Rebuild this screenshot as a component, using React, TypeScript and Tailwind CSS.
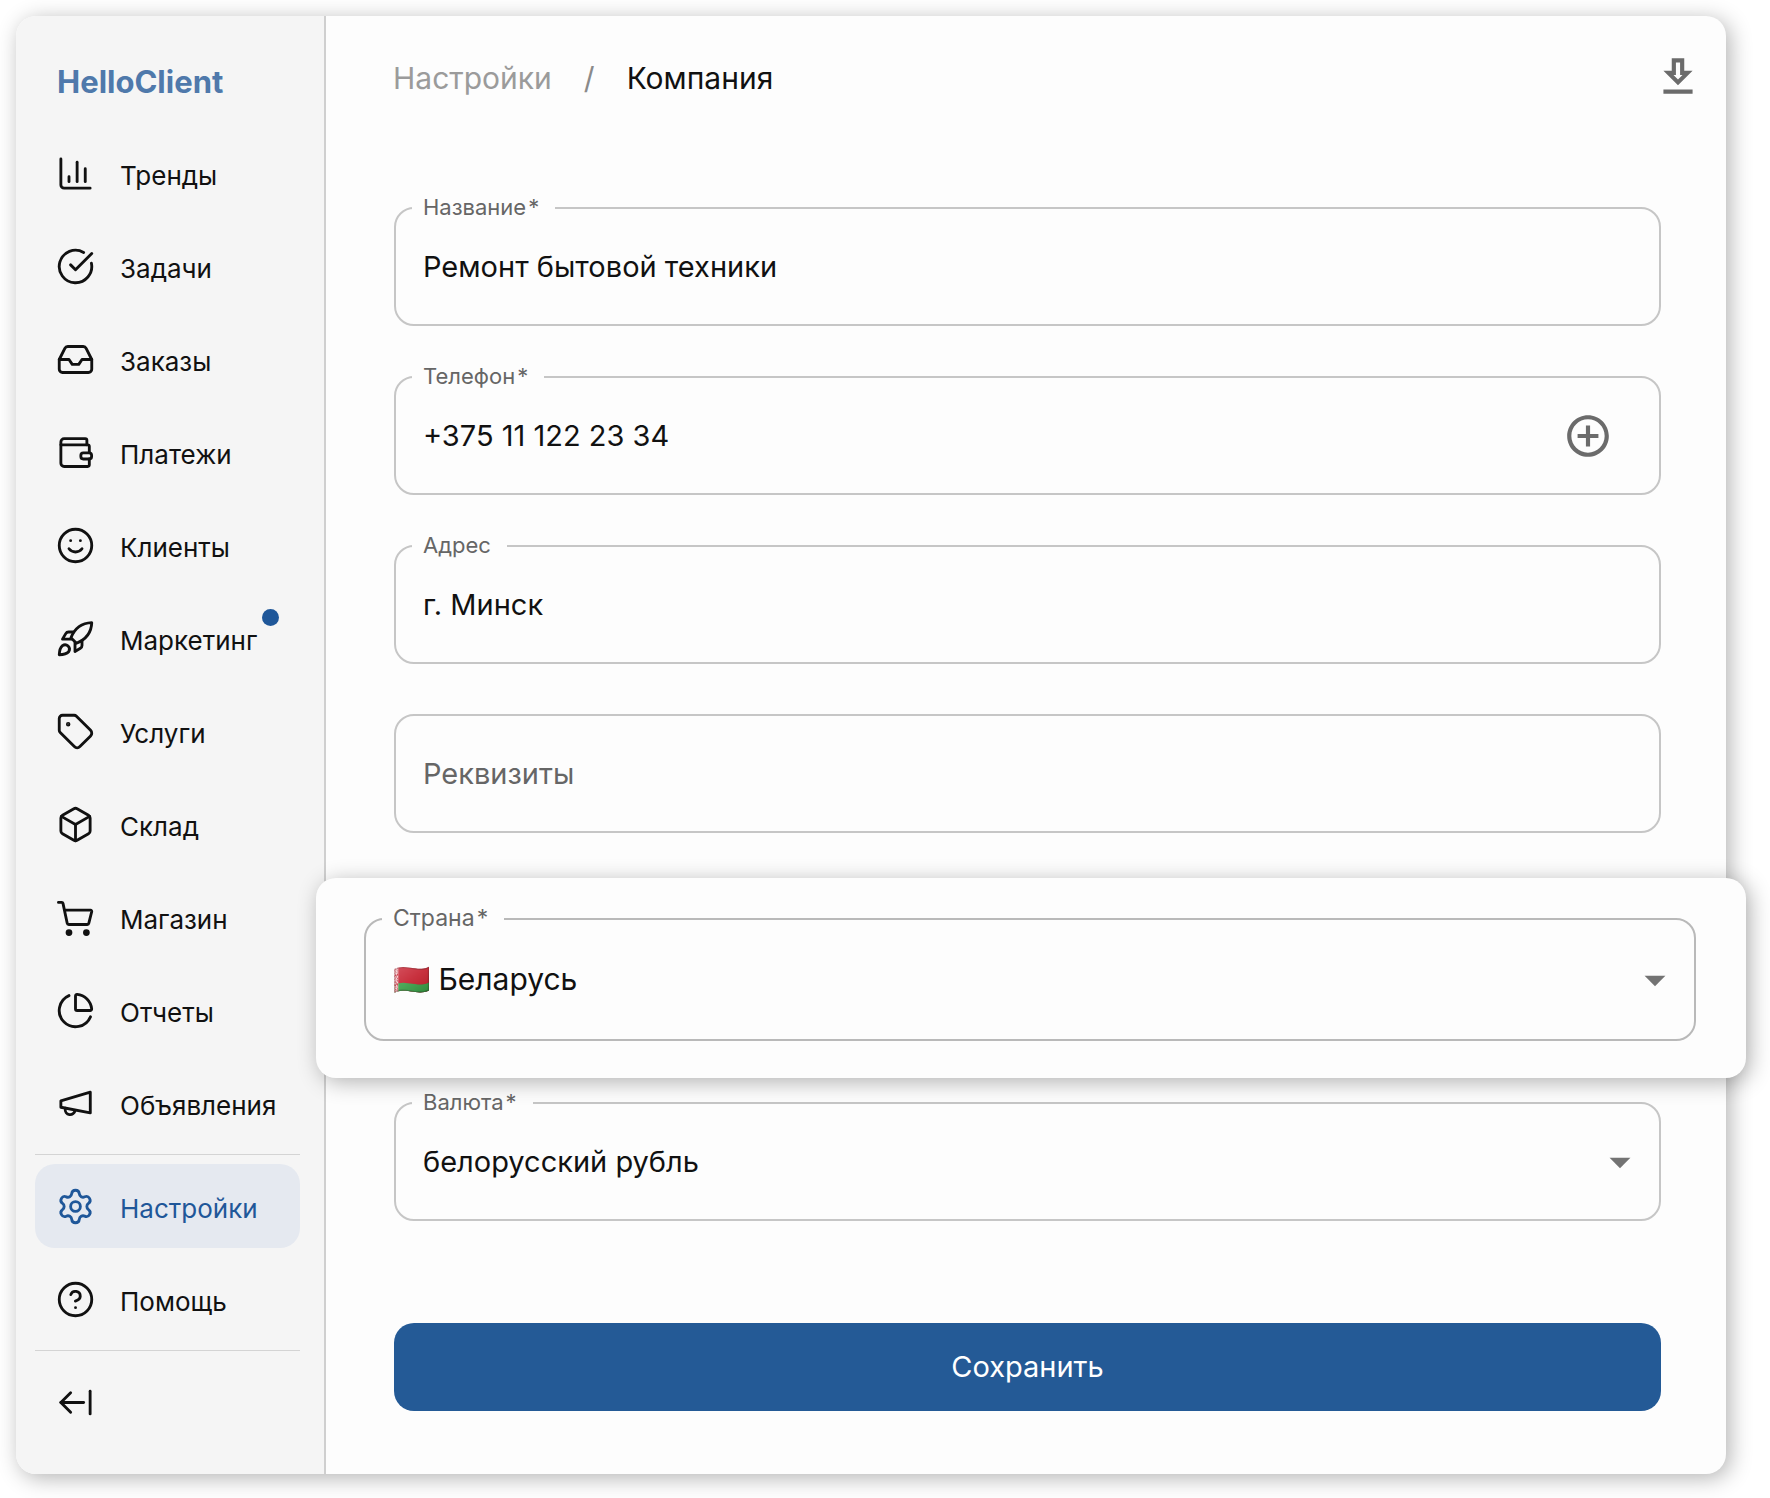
import React, { useState } from "react";
import {
  ArrowLeftFromLine,
  Box,
  ChartColumn,
  ChartPie,
  CircleCheckBig,
  CircleQuestionMark,
  Inbox,
  Settings,
  Smile,
  Tag,
} from "lucide-react";

type IconProps = { className?: string; strokeWidth?: number };

function StrokeIcon({ className, strokeWidth, children }: IconProps & { children: React.ReactNode }) {
  return (
    <svg
      viewBox="0 0 24 24"
      fill="none"
      stroke="currentColor"
      strokeWidth={strokeWidth}
      strokeLinecap="round"
      strokeLinejoin="round"
      className={className}
      aria-hidden="true"
    >
      {children}
    </svg>
  );
}

const WalletIcon = (props: IconProps) => (
  <StrokeIcon {...props}>
    <path d="M19 7.3V4.5a1 1 0 0 0-1-1H5a2 2 0 0 0-2 2v13.1a2 2 0 0 0 2 2h14.5a1 1 0 0 0 1-1V16" />
    <path d="M3 7.3h16.5a1 1 0 0 1 1 1v3.9" />
    <rect x="15.3" y="12.2" width="6.6" height="3.8" rx="1.5" />
  </StrokeIcon>
);

const RocketIcon = (props: IconProps) => (
  <StrokeIcon {...props}>
    <path d="M22 2.2c-5.3.2-10.3 3-12.8 9.3l3.4 3.4C19 12.3 21.8 7.5 22 2.2Z" />
    <path d="M10.6 8H7.7a2 2 0 0 0-1.7 1L4 12.4h5.6" />
    <path d="M16 13.3v3a2 2 0 0 1-1 1.7l-3.3 2v-5.6" />
    <path d="M2 22c.1-2.4.6-4.4 2-5.6a2.7 2.7 0 0 1 3.8 3.7C6.5 21.5 4.4 21.9 2 22Z" />
  </StrokeIcon>
);

const CartIcon = (props: IconProps) => (
  <StrokeIcon {...props}>
    <path d="M1.5 2.7h2a.8.8 0 0 1 .8.6l2.6 12.2a1 1 0 0 0 1 .8h11.3a1 1 0 0 0 1-.8L22 8.3a.7.7 0 0 0-.7-.8H5.4" />
    <circle cx="8" cy="21.3" r="1.2" fill="currentColor" />
    <circle cx="18.7" cy="21.3" r="1.2" fill="currentColor" />
  </StrokeIcon>
);

const MegaphoneIcon = (props: IconProps) => (
  <StrokeIcon {...props}>
    <path d="M3 10.4 21.1 5v12.8L3 14.3z" />
    <path d="M5.7 14.9v.5a3 3 0 0 0 6 .9" />
  </StrokeIcon>
);

const navItems = [
  { label: "Тренды", icon: ChartColumn },
  { label: "Задачи", icon: CircleCheckBig },
  { label: "Заказы", icon: Inbox },
  { label: "Платежи", icon: WalletIcon },
  { label: "Клиенты", icon: Smile },
  { label: "Маркетинг", icon: RocketIcon, badge: true },
  { label: "Услуги", icon: Tag },
  { label: "Склад", icon: Box },
  { label: "Магазин", icon: CartIcon },
  { label: "Отчеты", icon: ChartPie },
  { label: "Объявления", icon: MegaphoneIcon },
];

const footerItems = [
  { label: "Настройки", icon: Settings, active: true },
  { label: "Помощь", icon: CircleQuestionMark },
];

type NavLinkProps = {
  label: string;
  icon: React.ComponentType<IconProps>;
  badge?: boolean;
  active?: boolean;
};

function NavLink({ label, icon: Icon, badge, active }: NavLinkProps) {
  return (
    <a
      href="#"
      aria-current={active ? "page" : undefined}
      className={`flex h-[84px] items-center gap-[25px] rounded-[20px] pl-[21px] text-[26px] ${
        active ? "bg-[#e5e9f0] text-[#1f5799]" : "text-[#111111]"
      }`}
    >
      <Icon className="size-[39px] shrink-0" strokeWidth={1.75} />
      <span className="relative pt-1">
        {label}
        {badge && <span className="absolute -top-2 -right-[22px] size-[17px] rounded-full bg-[#1f5799]" />}
      </span>
    </a>
  );
}

type FieldProps = {
  id: string;
  label: string;
  required?: boolean;
  large?: boolean;
  children: React.ReactNode;
};

// Outlined field, the label sits in the gap of the border
function Field({ id, label, required, large, children }: FieldProps) {
  return (
    <fieldset className={`min-w-0 rounded-[20px] border-2 pb-[13px] ${large ? "border-[#b9b9b9]" : "border-[#c6c6c6]"}`}>
      <legend
        className={`ml-4 h-7 pr-4 pl-[11px] leading-[26px] text-[#666666] ${large ? "text-[23px]" : "text-[22px]"}`}
      >
        <label htmlFor={id}>
          {label}
          {required && <>&#8202;*</>}
        </label>
      </legend>
      {children}
    </fieldset>
  );
}

function DropDownArrow() {
  return (
    <svg
      viewBox="0 0 24 24"
      fill="#737373"
      className="pointer-events-none absolute top-1/2 right-[14px] size-[50px] -translate-y-1/2"
      aria-hidden="true"
    >
      <path d="m7 10 5 5 5-5z" />
    </svg>
  );
}

export default function App() {
  const [name, setName] = useState("Ремонт бытовой техники");
  const [phone, setPhone] = useState("+375 11 122 23 34");
  const [address, setAddress] = useState("г. Минск");
  const [details, setDetails] = useState("");

  return (
    <div className="flex min-h-screen bg-white pt-4 pr-11 pb-6 pl-4 font-['Inter','Liberation_Sans',sans-serif] text-[#111111]">
      <div className="flex w-full rounded-[20px] bg-[#fdfdfd] shadow-[4px_4px_22px_rgba(0,0,0,0.3)]">
        {/* Sidebar */}
        <aside className="w-[310px] shrink-0 rounded-l-[20px] border-r-2 border-[#cfcfcf] bg-[#f5f5f5] pt-[46px] pr-6 pl-[19px]">
          <a href="#" className="block pl-[22px] text-[31px] leading-10 font-bold text-[#4f79ab]">
            HelloClient
          </a>
          <nav className="mt-[29px] flex flex-col gap-[9px]">
            {navItems.map((item) => (
              <NavLink key={item.label} {...item} />
            ))}
            <hr className="border-[#d4d4d4]" />
            {footerItems.map((item) => (
              <NavLink key={item.label} {...item} />
            ))}
            <hr className="border-[#d4d4d4]" />
            <button type="button" aria-label="Свернуть меню" className="flex h-[84px] items-center pl-[21px]">
              <ArrowLeftFromLine className="size-[39px]" strokeWidth={1.75} />
            </button>
          </nav>
        </aside>

        {/* Content */}
        <main className="min-w-0 flex-1">
          <header className="flex items-center justify-between pt-9 pr-[23px] pl-[67px]">
            <nav className="flex items-center gap-8 pt-[3px] text-[30px]">
              <a href="#" className="text-[#9b9b9b]">Настройки</a>
              <span className="text-[#8a8a8a]">/</span>
              <span>Компания</span>
            </nav>
            <button type="button" aria-label="Скачать">
              <svg viewBox="0 0 24 24" fill="#6b6b6b" className="size-[50px]" aria-hidden="true">
                <path d="M19 9h-4V3H9v6H5l7 7 7-7zm-8 2V5h2v6h1.17L12 13.17 9.83 11H11zm-6 7h14v2H5z" />
              </svg>
            </button>
          </header>

          <form className="mt-[92px] flex flex-col gap-[37px] pr-[65px] pb-[63px] pl-[68px] text-[29px]">
            <Field id="name" label="Название" required>
              <input
                id="name"
                value={name}
                onChange={(e) => setName(e.target.value)}
                className="h-[89px] w-full px-[27px] outline-none"
              />
            </Field>

            <Field id="phone" label="Телефон" required>
              <div className="flex h-[89px] items-center pr-[46px]">
                <input
                  id="phone"
                  type="tel"
                  value={phone}
                  onChange={(e) => setPhone(e.target.value)}
                  className="h-full min-w-0 flex-1 px-[27px] outline-none"
                />
                <button type="button" aria-label="Добавить телефон">
                  <svg viewBox="0 0 24 24" fill="#6b6b6b" className="size-[50px]" aria-hidden="true">
                    <path d="M13 7h-2v4H7v2h4v4h2v-4h4v-2h-4V7zm-1-5C6.48 2 2 6.48 2 12s4.48 10 10 10 10-4.48 10-10S17.52 2 12 2zm0 18c-4.41 0-8-3.59-8-8s3.59-8 8-8 8 3.59 8 8-3.59 8-8 8z" />
                  </svg>
                </button>
              </div>
            </Field>

            <Field id="address" label="Адрес">
              <input
                id="address"
                value={address}
                onChange={(e) => setAddress(e.target.value)}
                className="h-[89px] w-full px-[27px] outline-none"
              />
            </Field>

            <input
              aria-label="Реквизиты"
              placeholder="Реквизиты"
              value={details}
              onChange={(e) => setDetails(e.target.value)}
              className="mt-[13px] h-[119px] w-full rounded-[20px] border-2 border-[#c6c6c6] px-[27px] outline-none placeholder:text-[#666666]"
            />

            {/* Raised country card, wider than the form */}
            <div className="relative z-10 mt-2 -mr-[85px] -mb-[26px] -ml-[78px] rounded-[20px] bg-[#fdfdfd] pt-[27px] pr-[50px] pb-[37px] pl-12 shadow-[4px_4px_22px_rgba(0,0,0,0.3)]">
              <Field id="country" label="Страна" required large>
                <div className="relative">
                  <select id="country" className="h-[93px] w-full appearance-none px-[27px] text-[30px] outline-none">
                    <option>🇧🇾 Беларусь</option>
                  </select>
                  <DropDownArrow />
                </div>
              </Field>
            </div>

            <Field id="currency" label="Валюта" required>
              <div className="relative">
                <select id="currency" className="h-[89px] w-full appearance-none px-[27px] outline-none">
                  <option>белорусский рубль</option>
                </select>
                <DropDownArrow />
              </div>
            </Field>

            <button type="submit" className="mt-[65px] h-[88px] rounded-[20px] bg-[#245a96] text-[29px] text-white">
              Сохранить
            </button>
          </form>
        </main>
      </div>
    </div>
  );
}
